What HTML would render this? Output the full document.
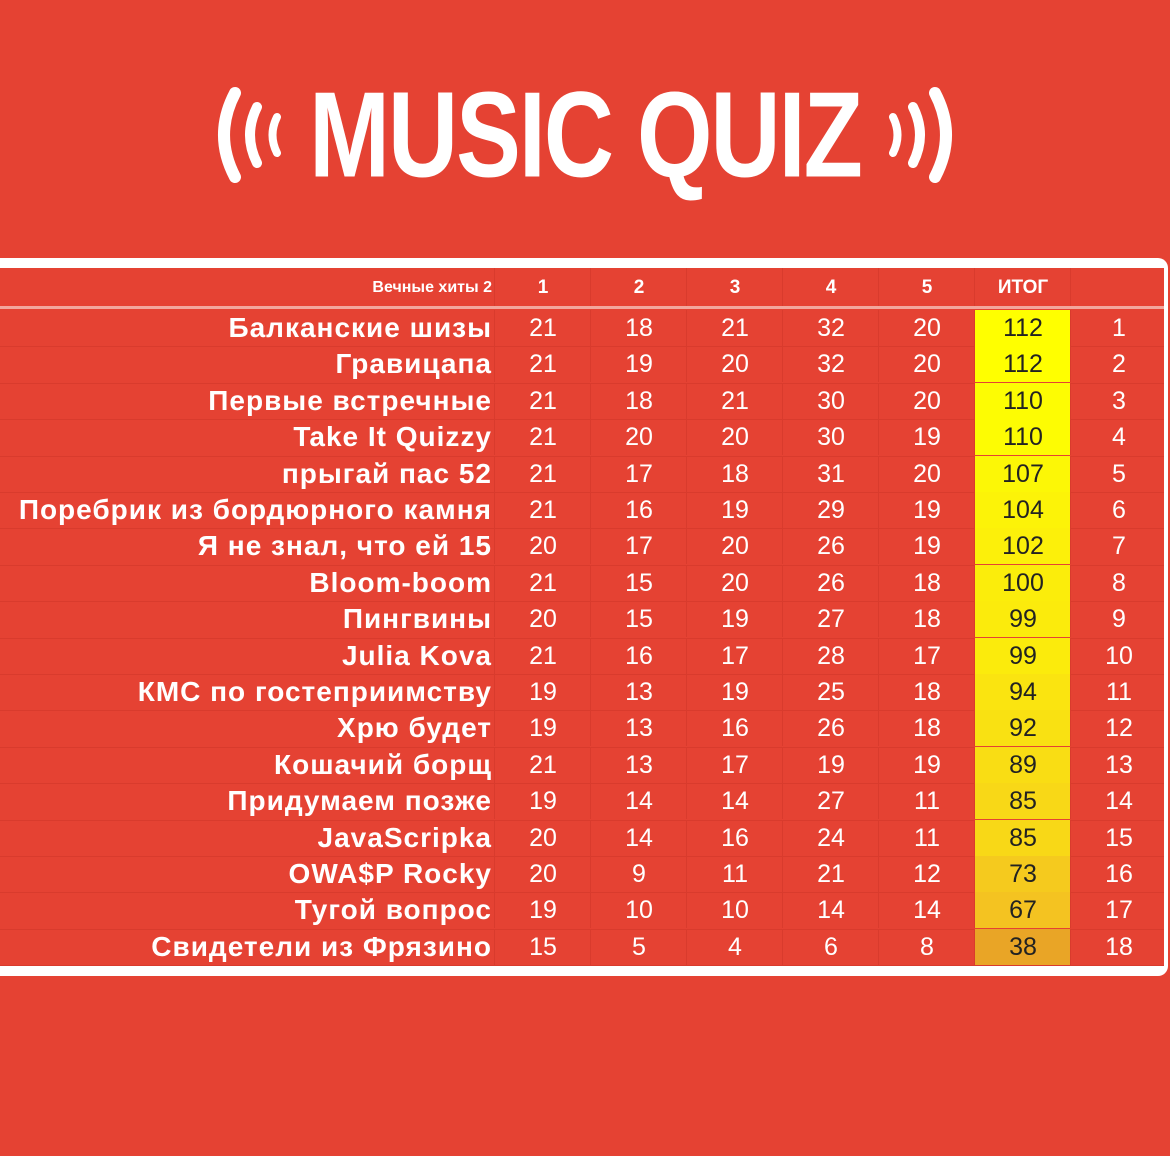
<!DOCTYPE html>
<html><head><meta charset="utf-8"><style>
body{margin:0;width:1170px;height:1156px;background:#e54233;position:relative;overflow:hidden;font-family:"Liberation Sans",sans-serif}
.title{position:absolute;left:285px;top:70px;width:600px;text-align:center;color:#fff;font-weight:bold;font-size:100px;letter-spacing:-2px;line-height:130px;white-space:nowrap;transform:scale(0.97,1.22);transform-origin:center center}
.frame{position:absolute;left:-10px;top:258px;width:1178px;height:718px;background:#fff;border-radius:10px}
.tbl{position:absolute;left:0;top:268px;width:1164px;height:698px;background:#e54233}
.hdr{position:absolute;left:0;top:0;width:1164px;height:38px;border-bottom:3px solid #f2a79d}
.row{position:absolute;left:0;width:1164px;height:36.4px;border-bottom:1px solid #d93b2d}
.nm{position:absolute;right:672px;color:#fff;font-weight:bold;font-size:28px;letter-spacing:1px;line-height:36px;white-space:nowrap}
.n{position:absolute;width:96px;text-align:center;font-size:25px;line-height:36px;color:#fff;border-left:1px solid #d93b2d;height:36px}
.t{color:#222}
.hc{position:absolute;top:0;width:96px;height:38px;line-height:40px;text-align:center;color:#fff;font-weight:bold;font-size:19px;border-left:1px solid #d93b2d}
</style></head><body>
<svg style="position:absolute;left:205px;top:85px" width="90" height="100" viewBox="0 0 90 100" fill="none" stroke="#fff" stroke-linecap="round">
<path d="M30 8 Q8 50 30 92" stroke-width="12"/><path d="M52 22 Q38 50 52 78" stroke-width="10"/><path d="M72 32 Q63 50 72 68" stroke-width="8"/></svg>
<svg style="position:absolute;left:875px;top:85px" width="90" height="100" viewBox="0 0 90 100" fill="none" stroke="#fff" stroke-linecap="round">
<path d="M60 8 Q82 50 60 92" stroke-width="12"/><path d="M38 22 Q52 50 38 78" stroke-width="10"/><path d="M18 32 Q27 50 18 68" stroke-width="8"/></svg>
<div class="title">MUSIC QUIZ</div>
<div class="frame"></div>
<div class="tbl">
<div class="hdr">
<div style="position:absolute;right:672px;top:0;line-height:40px;color:#fff;font-weight:bold;font-size:16px">Вечные хиты 2</div>
<div class="hc" style="left:494px">1</div><div class="hc" style="left:590px">2</div><div class="hc" style="left:686px">3</div><div class="hc" style="left:782px">4</div><div class="hc" style="left:878px">5</div><div class="hc" style="left:974px">ИТОГ</div><div class="hc" style="left:1070px"></div>
</div>
<div id="rows"></div>
</div>
<script>
var d=[["Балканские шизы",21,18,21,32,20,112,1,"#ffff00"],["Гравицапа",21,19,20,32,20,112,2,"#ffff00"],["Первые встречные",21,18,21,30,20,110,3,"#fdfc03"],["Take It Quizzy",21,20,20,30,19,110,4,"#fdfc03"],["прыгай пас 52",21,17,18,31,20,107,5,"#fcf706"],["Поребрик из бордюрного камня",21,16,19,29,19,104,6,"#fcf308"],["Я не знал, что ей 15",20,17,20,26,19,102,7,"#fcf00a"],["Bloom-boom",21,15,20,26,18,100,8,"#fbed0b"],["Пингвины",20,15,19,27,18,99,9,"#fbeb0c"],["Julia Kova",21,16,17,28,17,99,10,"#fbeb0c"],["КМС по гостеприимству",19,13,19,25,18,94,11,"#fae410"],["Хрю будет",19,13,16,26,18,92,12,"#f9e112"],["Кошачий борщ",21,13,17,19,19,89,13,"#f9dd14"],["Придумаем позже",19,14,14,27,11,85,14,"#f8d817"],["JavaScripka",20,14,16,24,11,85,15,"#f8d817"],["OWA$P Rocky",20,9,11,21,12,73,16,"#f5ca1e"],["Тугой вопрос",19,10,10,14,14,67,17,"#f4c321"],["Свидетели из Фрязино",15,5,4,6,8,38,18,"#e9a526"]];
var h="";d.forEach(function(r,i){var y=42+i*36.4;h+='<div class="row" style="top:'+y+'px"><div class="nm">'+r[0]+'</div>';for(var k=1;k<=7;k++){var x=494+(k-1)*96;h+='<div class="n'+(k==6?' t':'')+'" style="left:'+x+'px'+(k==6?';background:'+r[8]:'')+'">'+r[k]+'</div>';}h+='</div>';});
document.getElementById("rows").innerHTML=h;
</script>
</body></html>
